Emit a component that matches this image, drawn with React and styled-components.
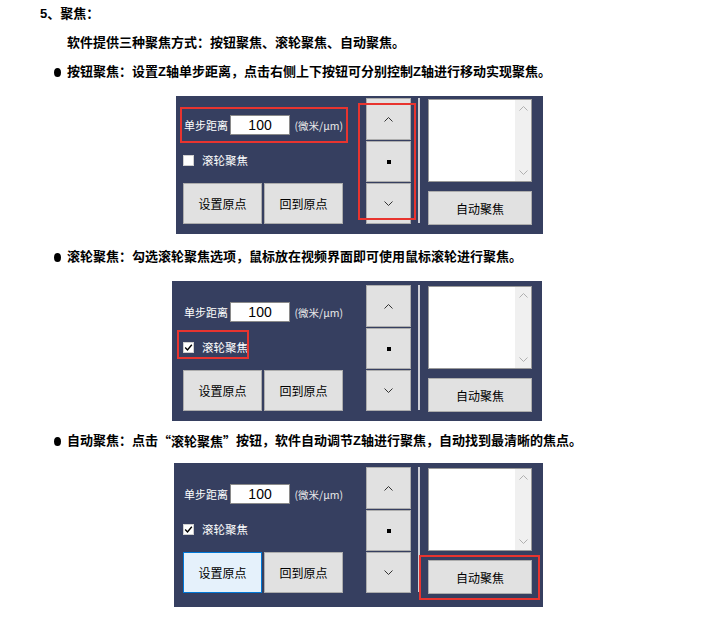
import React from "react";
import styled, { createGlobalStyle, css } from "styled-components";

const GlobalStyle = createGlobalStyle`
  html, body {
    margin: 0;
    padding: 0;
    background: #fff;
  }
`;

const Page = styled.div`
  width: 707px;
  height: 622px;
  padding-top: 4px;
  box-sizing: border-box;
  overflow: hidden;
  color: #000;
  font-family: "Liberation Sans", "Noto Sans CJK SC", sans-serif;
`;

const Line = styled.p`
  margin: ${p => p.$top || 0}px 0 0 ${p => p.$indent}px;
  height: 20px;
  line-height: 20px;
  font-size: 13px;
  font-weight: 700;
  display: flex;
  align-items: center;
  white-space: nowrap;
`;

const Cjk = styled.span`
  font-family: "Noto Sans CJK SC", sans-serif;
`;

const Dot = styled.span`
  width: 7px;
  height: 9px;
  border-radius: 50%;
  background: #000;
  margin-right: 6px;
  flex: none;
`;

const markCss = css`
  position: relative;
  &::after {
    content: "";
    position: absolute;
    inset: ${p => p.$mark};
    border: 2px solid #e8342f;
    pointer-events: none;
    z-index: 2;
  }
`;

const Panel = styled.div`
  margin: ${p => p.$top}px 0 0 ${p => p.$left}px;
  width: ${p => p.$w}px;
  height: ${p => p.$h}px;
  box-sizing: border-box;
  padding: ${p => p.$padTop}px 0 0 ${p => p.$padLeft}px;
  background: #363f60;
  display: flex;
  align-items: flex-start;
  font-family: "Noto Sans CJK SC", sans-serif;
`;

const LeftCol = styled.div`
  width: 160px;
  display: flex;
  flex-direction: column;
`;

const FieldRow = styled.div`
  margin-top: 17px;
  height: 20px;
  display: flex;
  align-items: center;
  ${p => p.$mark && markCss}
`;

const Label = styled.span`
  width: 49px;
  padding-left: 1px;
  box-sizing: border-box;
  font-size: 11px;
  color: #fff;
  white-space: nowrap;
`;

const Input = styled.div`
  width: 64px;
  height: 20px;
  box-sizing: border-box;
  background: #fff;
  border: 1px solid #8a8a8a;
  font-family: "Liberation Sans", sans-serif;
  font-size: 14px;
  line-height: 18px;
  text-align: center;
  color: #000;
`;

const Unit = styled.span`
  margin-left: 4px;
  font-size: 10.5px;
  color: #e8e8e8;
  white-space: nowrap;
`;

const CheckRow = styled.div`
  margin-top: 15px;
  height: 20px;
  display: flex;
  align-items: center;
  ${p => p.$mark && markCss}
`;

const Box = styled.span`
  width: 11px;
  height: 11px;
  box-sizing: border-box;
  background: #fff;
  border: 1px solid #cfcfcf;
  display: flex;
  align-items: center;
  justify-content: center;
`;

const CheckLabel = styled.span`
  margin-left: 8px;
  font-size: 11.5px;
  color: #fff;
`;

const ButtonRow = styled.div`
  margin-top: 13px;
  display: flex;
  gap: 2px;
`;

const Button = styled.div`
  width: ${p => p.$w || 79}px;
  height: ${p => p.$h || 41}px;
  box-sizing: border-box;
  background: ${p => (p.$active ? "#e5f1fb" : "#e1e1e1")};
  border: 1px solid ${p => (p.$active ? "#0078d7" : "#adadad")};
  display: flex;
  align-items: center;
  justify-content: center;
  font-size: 12px;
  color: #000;
  ${p => p.$mark && markCss}
`;

const ArrowCol = styled.div`
  margin-left: 23px;
  width: 45px;
  display: flex;
  flex-direction: column;
  gap: 1px;
  ${p => p.$mark && markCss}
`;

const Stop = styled.span`
  width: 4px;
  height: 4px;
  background: #000;
`;

const Separator = styled.div`
  margin-left: 7px;
  width: 2px;
  height: 125px;
  background: #cfd0d6;
`;

const RightCol = styled.div`
  margin-left: 8px;
  width: 104px;
  display: flex;
  flex-direction: column;
  gap: 9px;
  padding-top: 1px;
`;

const List = styled.div`
  height: 83px;
  box-sizing: border-box;
  background: #fff;
  border: 1px solid #9a9a9a;
  display: flex;
  justify-content: flex-end;
`;

const ScrollBar = styled.div`
  width: 16px;
  background: #f0f0f0;
  display: flex;
  flex-direction: column;
  justify-content: space-between;
  align-items: center;
  padding: 6px 0;
`;

const Chevron = ({ down, color = "#333" }) => (
  <svg width="9" height="5" viewBox="0 0 9 5">
    <path
      d={down ? "M0.5 0.5 L4.5 4.5 L8.5 0.5" : "M0.5 4.5 L4.5 0.5 L8.5 4.5"}
      fill="none"
      stroke={color}
      strokeWidth="1"
    />
  </svg>
);

const Check = () => (
  <svg width="9" height="9" viewBox="0 0 9 9">
    <path d="M1.2 4.6 L3.5 7 L7.8 1.8" fill="none" stroke="#000" strokeWidth="1.4" />
  </svg>
);

function FocusPanel({ checked, activeSet, markField, markArrows, markCheck, markAuto, ...rest }) {
  return (
    <Panel {...rest}>
      <LeftCol>
        <FieldRow $mark={markField}>
          <Label>单步距离</Label>
          <Input>100</Input>
          <Unit>(微米/μm)</Unit>
        </FieldRow>
        <CheckRow $mark={markCheck}>
          <Box>{checked && <Check />}</Box>
          <CheckLabel>滚轮聚焦</CheckLabel>
        </CheckRow>
        <ButtonRow>
          <Button $active={activeSet}>设置原点</Button>
          <Button>回到原点</Button>
        </ButtonRow>
      </LeftCol>
      <ArrowCol $mark={markArrows}>
        <Button $w={45} $h={42}><Chevron /></Button>
        <Button $w={45}><Stop /></Button>
        <Button $w={45}><Chevron down /></Button>
      </ArrowCol>
      <Separator />
      <RightCol>
        <List>
          <ScrollBar>
            <Chevron color="#b0b0b0" />
            <Chevron down color="#b0b0b0" />
          </ScrollBar>
        </List>
        <Button $w={104} $h={34} $mark={markAuto}>自动聚焦</Button>
      </RightCol>
    </Panel>
  );
}

export default function App() {
  return (
    <Page>
      <GlobalStyle />
      <Line $indent={40}>5、聚焦：</Line>
      <Line $top={9} $indent={67}>软件提供三种聚焦方式：按钮聚焦、滚轮聚焦、自动聚焦。</Line>
      <Line $top={9} $indent={54}>
        <Dot />按钮聚焦：设置Z轴单步距离，点击右侧上下按钮可分别控制Z轴进行移动实现聚焦。
      </Line>
      <FocusPanel
        $top={14} $left={176} $w={367} $h={138} $padTop={2} $padLeft={7}
        markField="-8px -5px -8px -3px"
        markArrows="5px -5px 4px -8px"
      />
      <Line $top={13} $indent={54}>
        <Dot />滚轮聚焦：勾选滚轮聚焦选项，鼠标放在视频界面即可使用鼠标滚轮进行聚焦。
      </Line>
      <FocusPanel
        $top={14} $left={172} $w={370} $h={140} $padTop={4} $padLeft={11}
        checked
        markCheck="-7px 94px -2px -6px"
      />
      <Line $top={10} $indent={54}>
        <Dot />自动聚焦：点击<Cjk>“滚轮聚焦”</Cjk>按钮，软件自动调节Z轴进行聚焦，自动找到最清晰的焦点。
      </Line>
      <FocusPanel
        $top={12} $left={174} $w={369} $h={144} $padTop={4} $padLeft={9}
        checked
        activeSet
        markAuto="-6px -9px -7px -10px"
      />
    </Page>
  );
}
